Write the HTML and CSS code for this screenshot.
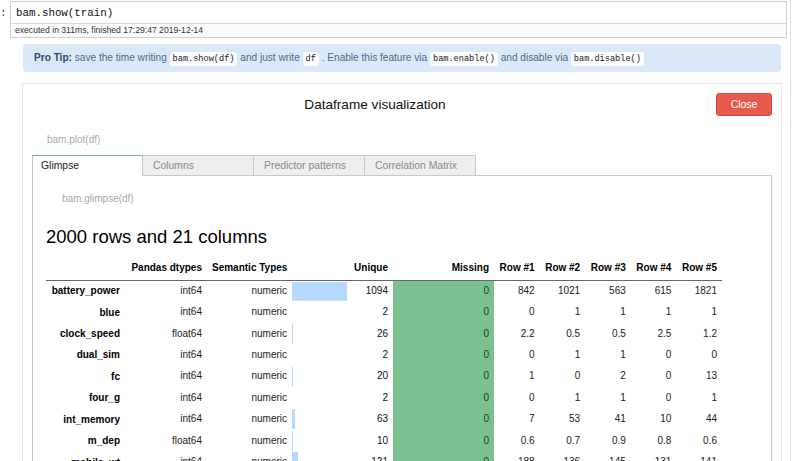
FILE: index.html
```html
<!DOCTYPE html>
<html>
<head>
<meta charset="utf-8">
<link rel="stylesheet" href="styles.css">
</head>
<body>
<div class="page">
  <div class="cell">
    <div class="prompt">:</div>
    <div class="input">
      <div class="code">bam.show(train)</div>
      <div class="exec">executed in 311ms, finished 17:29:47 2019-12-14</div>
    </div>
  </div>
  <div class="output">
    <div class="tip"><b>Pro Tip:</b> save the time writing <code>bam.show(df)</code> and just write <code>df</code> . Enable this feature via <code>bam.enable()</code> and disable via <code>bam.disable()</code></div>
    <div class="modal">
      <div class="modal-head">
        <div class="title">Dataframe visualization</div>
        <button class="close">Close</button>
      </div>
      <div class="hint">bam.plot(df)</div>
      <div class="tabs">
        <div class="tab active">Glimpse</div>
        <div class="tab">Columns</div>
        <div class="tab">Predictor patterns</div>
        <div class="tab">Correlation Matrix</div>
        <div class="tab-fill"></div>
      </div>
      <div class="panel">
        <div class="hint sub">bam.glimpse(df)</div>
        <h2 class="heading">2000 rows and 21 columns</h2>
        <table class="glimpse">
          <colgroup>
            <col class="c-label"><col class="c-dtype"><col class="c-sem"><col class="c-uniq"><col class="c-miss">
            <col class="c-row"><col class="c-row"><col class="c-row"><col class="c-row"><col class="c-row">
          </colgroup>
          <thead>
            <tr><th></th><th>Pandas dtypes</th><th>Semantic Types</th><th>Unique</th><th>Missing</th><th>Row #1</th><th>Row #2</th><th>Row #3</th><th>Row #4</th><th>Row #5</th></tr>
          </thead>
          <tbody>
            <tr><th>battery_power</th><td>int64</td><td>numeric</td><td class="uniq" style="--w:54.7%">1094</td><td class="miss">0</td><td>842</td><td>1021</td><td>563</td><td>615</td><td>1821</td></tr>
            <tr><th>blue</th><td>int64</td><td>numeric</td><td class="uniq" style="--w:0.1%">2</td><td class="miss">0</td><td>0</td><td>1</td><td>1</td><td>1</td><td>1</td></tr>
            <tr><th>clock_speed</th><td>float64</td><td>numeric</td><td class="uniq" style="--w:1.3%">26</td><td class="miss">0</td><td>2.2</td><td>0.5</td><td>0.5</td><td>2.5</td><td>1.2</td></tr>
            <tr><th>dual_sim</th><td>int64</td><td>numeric</td><td class="uniq" style="--w:0.1%">2</td><td class="miss">0</td><td>0</td><td>1</td><td>1</td><td>0</td><td>0</td></tr>
            <tr><th>fc</th><td>int64</td><td>numeric</td><td class="uniq" style="--w:1%">20</td><td class="miss">0</td><td>1</td><td>0</td><td>2</td><td>0</td><td>13</td></tr>
            <tr><th>four_g</th><td>int64</td><td>numeric</td><td class="uniq" style="--w:0.1%">2</td><td class="miss">0</td><td>0</td><td>1</td><td>1</td><td>0</td><td>1</td></tr>
            <tr><th>int_memory</th><td>int64</td><td>numeric</td><td class="uniq" style="--w:3.15%">63</td><td class="miss">0</td><td>7</td><td>53</td><td>41</td><td>10</td><td>44</td></tr>
            <tr><th>m_dep</th><td>float64</td><td>numeric</td><td class="uniq" style="--w:0.5%">10</td><td class="miss">0</td><td>0.6</td><td>0.7</td><td>0.9</td><td>0.8</td><td>0.6</td></tr>
            <tr><th>mobile_wt</th><td>int64</td><td>numeric</td><td class="uniq" style="--w:6.05%">121</td><td class="miss">0</td><td>188</td><td>136</td><td>145</td><td>131</td><td>141</td></tr>
            <tr><th>n_cores</th><td>int64</td><td>numeric</td><td class="uniq" style="--w:0.4%">8</td><td class="miss">0</td><td>2</td><td>3</td><td>5</td><td>6</td><td>2</td></tr>
          </tbody>
        </table>
      </div>
    </div>
  </div>
</div>
</body>
</html>
```

FILE: styles.css
```css
* { box-sizing: border-box; }
html, body {
  margin: 0;
  padding: 0;
  background: #fff;
  overflow: hidden;
}
body {
  font-family: "Liberation Sans", Arial, sans-serif;
  color: #222;
}
.page {
  width: 791px;
  height: 461px;
  border-right: 1px solid #dedede;
  padding-top: 1px;
  overflow: hidden;
}
.cell {
  display: flex;
}
.prompt {
  width: 10px;
  font-family: "Liberation Mono", monospace;
  font-size: 11px;
  line-height: 24px;
  color: #333;
}
.input {
  width: 777px;
  border: 1px solid #cfcfcf;
  background: #fcfcfc;
}
.code {
  height: 22px;
  line-height: 22px;
  padding-left: 5px;
  font-family: "Liberation Mono", monospace;
  font-size: 10.8px;
  color: #111;
  border-bottom: 1px solid #d8d8d8;
  background: #fff;
}
.exec {
  height: 13px;
  line-height: 13px;
  padding-left: 4px;
  font-size: 8.6px;
  color: #333;
}
.output {
  padding-left: 22px;
}
.tip {
  margin: 6px 0 0 1px;
  width: 758px;
  height: 28px;
  line-height: 28px;
  padding: 0 11px;
  background: #dbe8f8;
  border-radius: 4px;
  font-size: 10.1px;
  color: #4a6a8c;
  white-space: nowrap;
}
.tip b {
  color: #2b4a6f;
}
.tip code {
  font-family: "Liberation Mono", monospace;
  font-size: 8.6px;
  background: #fbfcfe;
  color: #222;
  padding: 2px 3px;
  border-radius: 3px;
}
.modal {
  margin-top: 11px;
  width: 760px;
  border: 1px solid #e6e6e6;
  padding: 0 9px;
  height: 400px;
}
.modal-head {
  display: flex;
  align-items: flex-start;
  padding-top: 9px;
  height: 41px;
}
.title {
  flex: 1;
  text-align: center;
  font-size: 13.6px;
  line-height: 23px;
  color: #111;
  padding-left: 2px;
}
.close {
  width: 56px;
  height: 23px;
  border: 1px solid #d9493b;
  background: #e85a4b;
  color: #fff;
  border-radius: 3px;
  font-family: "Liberation Sans", Arial, sans-serif;
  font-size: 10.4px;
  padding: 0;
}
.hint {
  margin-top: 7px;
  padding-left: 15px;
  font-size: 10px;
  line-height: 16px;
  color: #a8a8a8;
}
.tabs {
  display: flex;
  margin-top: 7px;
  height: 21px;
}
.tab {
  width: 111px;
  height: 21px;
  line-height: 20px;
  padding-left: 10px;
  font-size: 10.4px;
  color: #8a8a8a;
  background: #eeeeee;
  border: 1px solid #c8c8c8;
  border-left: none;
}
.tab.active {
  background: #fff;
  color: #222;
  border-left: 1px solid #c8c8c8;
  border-top: 1px solid #7aa6c8;
  border-bottom: none;
  padding-left: 8px;
}
.tab-fill {
  flex: 1;
  border-bottom: 1px solid #c8c8c8;
}
.panel {
  border: 1px solid #c8c8c8;
  border-top: none;
  padding: 15px 0 0 13px;
  height: 300px;
}
.hint.sub {
  margin-top: 0;
  padding-left: 16px;
}
.heading {
  margin: 19px 0 10px 0;
  font-size: 18.5px;
  font-weight: normal;
  line-height: 22px;
  color: #000;
}
.glimpse {
  border-collapse: collapse;
  table-layout: fixed;
  width: 676px;
  font-size: 10px;
}
.c-label { width: 79px; }
.c-dtype { width: 82px; }
.c-sem { width: 85px; }
.c-uniq { width: 101px; }
.c-miss { width: 101px; }
.c-row { width: 45.6px; }
.glimpse thead tr {
  height: 22px;
  border-bottom: 1px solid #666;
}
.glimpse thead th {
  font-weight: bold;
  color: #000;
  text-align: right;
  padding: 0 5px 3px 5px;
  white-space: nowrap;
}
.glimpse tbody tr {
  height: 21.43px;
}
.glimpse tbody th {
  font-weight: bold;
  color: #000;
  text-align: right;
  padding: 0 5px;
  white-space: nowrap;
}
.glimpse td {
  text-align: right;
  padding: 0 5px;
  color: #222;
  line-height: 12px;
  white-space: nowrap;
}
.glimpse td.uniq {
  background: linear-gradient(90deg, #b4d9fa var(--w), transparent var(--w));
  background-size: 100% 94%;
  background-repeat: no-repeat;
  background-position: 0 50%;
  color: #111;
}
.glimpse td.miss {
  background: #7bc08f;
  color: #1f3a25;
}
```
